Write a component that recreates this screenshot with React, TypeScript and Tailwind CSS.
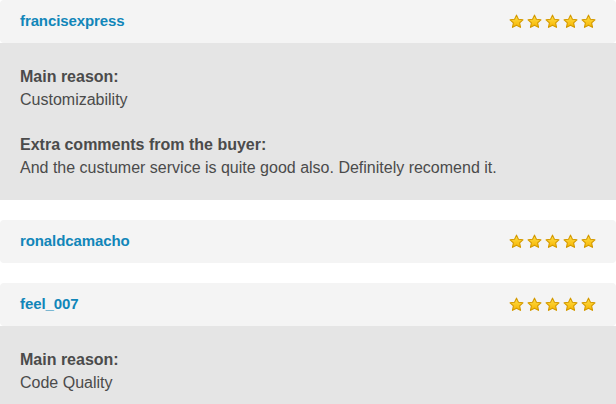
const reviews = [
  {
    user: "francisexpress",
    reason: "Customizability",
    comment: "And the custumer service is quite good also. Definitely recomend it.",
  },
  { user: "ronaldcamacho" },
  { user: "feel_007", reason: "Code Quality" },
];

function Star() {
  return (
    <svg width="15" height="15" viewBox="0 0 24 24">
      <defs>
        <linearGradient id="starFill" x1="0" y1="0" x2="0" y2="1">
          <stop offset="0" stopColor="#ffe04a" />
          <stop offset="1" stopColor="#f7b500" />
        </linearGradient>
      </defs>
      <path
        d="M12 1.8l3.1 6.6 7.2.9-5.3 5 1.4 7.1L12 17.9l-6.4 3.5 1.4-7.1-5.3-5 7.2-.9z"
        fill="url(#starFill)"
        stroke="#d49a00"
        strokeWidth="1.8"
        strokeLinejoin="round"
      />
    </svg>
  );
}

type Review = { user: string; reason?: string; comment?: string };

function ReviewCard({ review }: { review: Review }) {
  const hasBody = review.reason || review.comment;
  return (
    <div className="mb-5">
      <div className="flex items-center justify-between h-[43px] pl-5 pr-[20px] bg-[#f4f4f4] rounded">
        <span className="text-[15px] tracking-[-0.1px] font-bold text-[#1186b9]">{review.user}</span>
        <div className="flex gap-[3px]">
          {[0, 1, 2, 3, 4].map((i) => (
            <Star key={i} />
          ))}
        </div>
      </div>
      {hasBody && (
        <div className="bg-[#e5e5e5] px-5 pt-[22px] pb-[21px] text-[16px] leading-[23px] text-[#4b4b4b]">
          {review.reason && (
            <div>
              <div className="font-bold">Main reason:</div>
              <div>{review.reason}</div>
            </div>
          )}
          {review.comment && (
            <div className="mt-[22px]">
              <div className="font-bold">Extra comments from the buyer:</div>
              <div>{review.comment}</div>
            </div>
          )}
        </div>
      )}
    </div>
  );
}

export default function App() {
  return (
    <div className="w-[616px] h-[404px] overflow-hidden bg-white font-['Liberation_Sans',Arial,sans-serif]">
      {reviews.map((r) => (
        <ReviewCard key={r.user} review={r} />
      ))}
    </div>
  );
}
